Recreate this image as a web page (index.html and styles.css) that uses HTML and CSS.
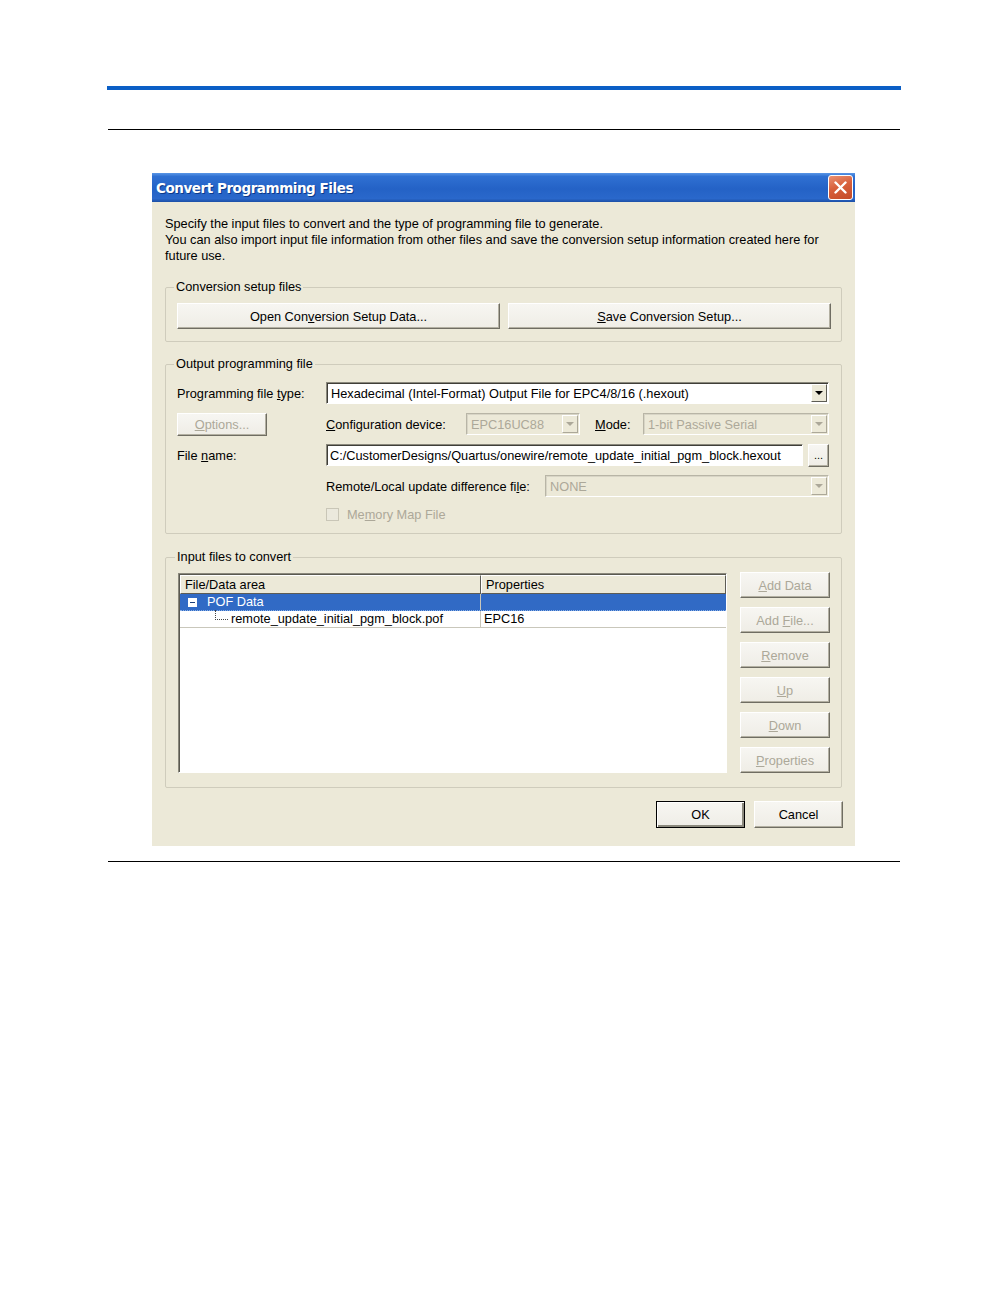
FILE: index.html
```html
<!DOCTYPE html>
<html>
<head>
  <title>Convert Programming Files</title>
  <link rel="stylesheet" href="styles.css">
</head>
<body>
  <div class="page">
    <div class="rule-blue"></div>
    <div class="rule rule-top"></div>

    <div class="dialog">
      <div class="titlebar">
        <span class="title">Convert Programming Files</span>
        <span class="close">
          <svg width="13" height="13" viewBox="0 0 13 13">
            <path d="M1.5 1.5 L11.5 11.5 M11.5 1.5 L1.5 11.5" stroke="#fff" stroke-width="2.4" stroke-linecap="round"/>
          </svg>
        </span>
      </div>

      <div class="dialog-body">
        <p class="intro">Specify the input files to convert and the type of programming file to generate.<br>You can also import input file information from other files and save the conversion setup information created here for<br>future use.</p>

        <fieldset class="group setup">
          <legend>Conversion setup files</legend>
          <div class="setup-row">
            <button class="btn">Open Con<u>v</u>ersion Setup Data...</button>
            <button class="btn"><u>S</u>ave Conversion Setup...</button>
          </div>
        </fieldset>

        <fieldset class="group output">
          <legend>Output programming file</legend>
          <div class="form">
            <span class="lbl">Programming file <u>t</u>ype:</span>
            <div class="combo">
              <span class="combo-text">Hexadecimal (Intel-Format) Output File for EPC4/8/16 (.hexout)</span>
              <span class="combo-arrow"><i></i></span>
            </div>

            <button class="btn options dis"><u>O</u>ptions...</button>
            <div class="device-row">
              <span class="device-lbl"><u>C</u>onfiguration device:</span>
              <div class="combo disabled device-combo">
                <span class="combo-text">EPC16UC88</span>
                <span class="combo-arrow"><i></i></span>
              </div>
              <span class="mode-lbl"><u>M</u>ode:</span>
              <div class="combo disabled mode-combo">
                <span class="combo-text">1-bit Passive Serial</span>
                <span class="combo-arrow"><i></i></span>
              </div>
            </div>

            <span class="lbl">File <u>n</u>ame:</span>
            <div class="file-row">
              <div class="field">C:/CustomerDesigns/Quartus/onewire/remote_update_initial_pgm_block.hexout</div>
              <button class="btn browse">...</button>
            </div>

            <span></span>
            <div class="diff-row">
              <span class="diff-lbl">Remote/Local update difference fi<u>l</u>e:</span>
              <div class="combo disabled diff-combo">
                <span class="combo-text">NONE</span>
                <span class="combo-arrow"><i></i></span>
              </div>
            </div>

            <span></span>
            <div class="check-row">
              <span class="check"></span>
              <span class="dis">Me<u>m</u>ory Map File</span>
            </div>
          </div>
        </fieldset>

        <fieldset class="group inputs">
          <legend>Input files to convert</legend>
          <div class="inputs-body">
            <div class="list">
              <div class="list-head">
                <span class="col-file">File/Data area</span>
                <span class="col-prop">Properties</span>
              </div>
              <div class="list-row selected">
                <span class="col-file"><span class="tree-box"></span>POF Data</span>
                <span class="col-prop"></span>
              </div>
              <div class="list-row">
                <span class="col-file"><span class="tree-line"></span>remote_update_initial_pgm_block.pof</span>
                <span class="col-prop">EPC16</span>
              </div>
            </div>
            <div class="side-buttons">
              <button class="btn dis"><u>A</u>dd Data</button>
              <button class="btn dis">Add <u>F</u>ile...</button>
              <button class="btn dis"><u>R</u>emove</button>
              <button class="btn dis"><u>U</u>p</button>
              <button class="btn dis"><u>D</u>own</button>
              <button class="btn dis"><u>P</u>roperties</button>
            </div>
          </div>
        </fieldset>

        <div class="actions">
          <button class="btn default">OK</button>
          <button class="btn">Cancel</button>
        </div>
      </div>
    </div>

    <div class="rule rule-bottom"></div>
  </div>
</body>
</html>
```

FILE: styles.css
```css
body {
  margin: 0;
  background: #fff;
  font-family: "Liberation Sans", Arial, sans-serif;
  font-size: 12.75px;
  color: #000;
}

.page {
  width: 794px;
  margin: 0 auto;
  padding-top: 86px;
}

.rule-blue {
  height: 4px;
  background: #0b5fc6;
}

.rule {
  height: 1px;
  margin: 0 1px;
  background: #000;
}

.rule-top {
  margin-top: 39px;
}

.rule-bottom {
  margin-top: 15px;
}

/* dialog window */
.dialog {
  width: 703px;
  margin: 43px 0 0 45px;
  background: #ece9d8;
}

.titlebar {
  height: 29px;
  display: flex;
  align-items: center;
  justify-content: space-between;
  padding: 0 2px 0 4px;
  background: linear-gradient(180deg, #5a96e6 0%, #2f70d2 12%, #2462c6 55%, #2a68cb 88%, #1c4fa6 100%);
}

.title {
  color: #fff;
  font-family: "DejaVu Sans", sans-serif;
  font-weight: bold;
  font-size: 13.5px;
  letter-spacing: -0.45px;
  text-shadow: 1px 1px #0c3a8a;
}

.close {
  width: 23px;
  height: 23px;
  display: flex;
  align-items: center;
  justify-content: center;
  border: 1px solid #fff;
  border-radius: 3px;
  background: linear-gradient(160deg, #ea9274 0%, #d8603c 45%, #c44a28 100%);
}

.dialog-body {
  padding: 14px 13px 18px;
}

.intro {
  margin: 0;
  line-height: 16px;
  white-space: nowrap;
}

/* group boxes */
.group {
  margin: 15px 0 0;
  border: 1px solid #cfccbc;
  border-radius: 2px;
  min-width: 0;
}

.group legend {
  padding: 0 2px;
  margin-left: -3px;
  line-height: 16px;
}

.setup {
  padding: 8px 10px 12px 11px;
}

.output {
  margin-top: 14px;
  padding: 10px 12px 11px 11px;
}

.inputs {
  margin-top: 15px;
  padding: 8px 11px 14px 12px;
}

/* buttons */
.btn {
  font-family: inherit;
  font-size: inherit;
  color: #000;
  height: 26px;
  padding: 0;
  background: linear-gradient(180deg, #f7f6f2 0%, #efede6 100%);
  border: 1px solid;
  border-color: #fff #6f6d62 #6f6d62 #fff;
  box-shadow: inset -1px -1px #b3b0a2;
}

.btn.dis,
.dis {
  color: #aca899;
}

.setup-row {
  display: flex;
  gap: 8px;
}

.setup-row .btn {
  flex: 1;
}

/* output form */
.form {
  display: grid;
  grid-template-columns: 149px 503px;
  grid-template-rows: repeat(4, 22px) 16px;
  row-gap: 9px;
  align-items: center;
}

.options {
  width: 90px;
  height: 23px;
}

.combo {
  height: 22px;
  display: flex;
  align-items: center;
  box-sizing: border-box;
  background: #fff;
  border: 1px solid;
  border-color: #8a887c #fff #fff #8a887c;
  box-shadow: inset 1px 1px #3f3e38;
}

.combo-text {
  flex: 1;
  padding: 1px 0 0 4px;
  white-space: nowrap;
  overflow: hidden;
}

.combo-arrow {
  width: 16px;
  height: 18px;
  margin-right: 1px;
  display: flex;
  align-items: center;
  justify-content: center;
  box-sizing: border-box;
  background: #ece9d8;
  border: 1px solid;
  border-color: #fff #5d5c55 #5d5c55 #fff;
}

.combo-arrow i {
  width: 0;
  height: 0;
  border-left: 4px solid transparent;
  border-right: 4px solid transparent;
  border-top: 4px solid #000;
}

.combo.disabled {
  background: #ece9d8;
  border-color: #b8b5a6 #fff #fff #b8b5a6;
  box-shadow: inset 1px 1px #d8d5c6;
  color: #aca899;
}

.combo.disabled .combo-arrow {
  border-color: #fff #aca899 #aca899 #fff;
}

.combo.disabled .combo-arrow i {
  border-top-color: #aca899;
}

.device-row,
.diff-row,
.file-row,
.check-row {
  display: flex;
  align-items: center;
}

.device-lbl {
  width: 140px;
}

.device-combo {
  width: 114px;
}

.mode-lbl {
  width: 48px;
  margin-left: 15px;
}

.mode-combo {
  width: 186px;
}

.field {
  width: 477px;
  height: 22px;
  box-sizing: border-box;
  padding: 3px 0 0 3px;
  background: #fff;
  border: 1px solid;
  border-color: #8a887c #fff #fff #8a887c;
  box-shadow: inset 1px 1px #3f3e38;
  white-space: nowrap;
  overflow: hidden;
}

.browse {
  width: 21px;
  height: 23px;
  margin-left: 5px;
  font-size: 11px;
}

.diff-lbl {
  width: 219px;
}

.diff-combo {
  width: 284px;
}

.check {
  width: 13px;
  height: 13px;
  margin-right: 8px;
  box-sizing: border-box;
  border: 1px solid #c9c6b7;
  background: #ebe9dd;
}

/* input list */
.inputs-body {
  display: flex;
  gap: 13px;
}

.list {
  width: 549px;
  height: 200px;
  box-sizing: border-box;
  background: #fff;
  border: 1px solid;
  border-color: #8a887c #fff #fff #8a887c;
  box-shadow: inset 1px 1px #5a5950;
}

.list-head,
.list-row {
  display: flex;
}

.list-head {
  height: 19px;
  margin: 1px 0 0 1px;
  line-height: 19px;
  background: #ece9d8;
}

.list-head span {
  box-sizing: border-box;
  padding-left: 4px;
  border: 1px solid;
  border-color: #fff #5d5c55 #5d5c55 #fff;
  line-height: 17px;
}

.col-file {
  width: 301px;
  display: flex;
  align-items: center;
}

.col-prop {
  flex: 1;
}

.list-row {
  height: 16px;
  line-height: 16px;
  margin-left: 1px;
  border-bottom: 1px solid #c9c7bb;
}

.list-row .col-file {
  box-sizing: border-box;
  padding-left: 4px;
  border-right: 1px solid #c9c7bb;
}

.list-row .col-prop {
  padding-left: 3px;
}

.list-row.selected {
  background: #316ac5;
  color: #fff;
  border-bottom-style: dotted;
  border-bottom-color: #8ab0e6;
}

.tree-box {
  position: relative;
  width: 9px;
  height: 9px;
  margin: 0 10px 0 4px;
  background: #fff;
}

.tree-box::after {
  content: "";
  position: absolute;
  left: 2px;
  top: 4px;
  width: 5px;
  height: 1px;
  background: #1b3f7a;
}

.tree-line {
  width: 12px;
  height: 9px;
  margin: -8px 3px 0 31px;
  border-left: 1px dotted #444;
  border-bottom: 1px dotted #444;
}

.side-buttons {
  width: 90px;
  display: flex;
  flex-direction: column;
  gap: 9px;
  margin-top: -1px;
}

.side-buttons .btn {
  width: 90px;
}

/* OK / Cancel */
.actions {
  display: flex;
  justify-content: flex-end;
  gap: 9px;
  margin: 13px -1px 0 0;
}

.actions .btn {
  width: 89px;
  height: 27px;
}

.btn.default {
  border-color: #000;
  box-shadow: inset 1px 1px #fff, inset -2px -2px #8b897d;
}
```
